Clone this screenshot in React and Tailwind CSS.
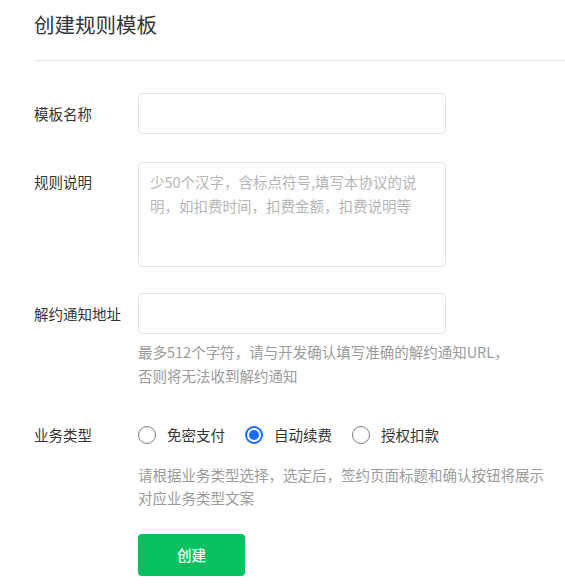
import { useState } from "react";

const font = { fontFamily: '"Noto Sans CJK SC", "Liberation Sans", sans-serif' };

const types = ["免密支付", "自动续费", "授权扣款"];

function Radio({ checked, label, onClick }) {
  return (
    <button type="button" onClick={onClick} className="flex items-center gap-[11px] cursor-pointer">
      {checked ? (
        <span className="flex h-[18px] w-[18px] items-center justify-center rounded-full border-2 border-[#1a6dff]">
          <span className="h-[10px] w-[10px] rounded-full bg-[#1a6dff]" />
        </span>
      ) : (
        <span className="h-[18px] w-[18px] rounded-full border-[1.5px] border-[#7f7f7f]" />
      )}
      <span className="text-[14.5px] leading-[24px] text-[#353535]">{label}</span>
    </button>
  );
}

export default function App() {
  const [type, setType] = useState("自动续费");

  return (
    <div className="min-h-[588px] w-[565px] bg-white pl-[34px]" style={font}>
      {/* Header */}
      <div className="border-b border-[#e6e6e6] pt-[10px] pb-[22px]">
        <h1 className="text-[20.5px] leading-[28px] text-[#353535]">创建规则模板</h1>
      </div>

      {/* Name */}
      <div className="mt-[32px] flex">
        <label className="w-[104px] text-[14.5px] leading-[41px] text-[#353535]">模板名称</label>
        <input className="h-[41px] w-[308px] rounded-[4px] border border-[#e3e3e3] px-[11px] text-[14.5px] outline-none" />
      </div>

      {/* Description */}
      <div className="mt-[28px] flex">
        <label className="w-[104px] pt-[8px] text-[14.5px] leading-[24px] text-[#353535]">规则说明</label>
        <textarea
          className="h-[105px] w-[308px] resize-none rounded-[4px] border border-[#e3e3e3] px-[11px] pt-[7px] text-[14.5px] leading-[24px] outline-none placeholder:text-[#b5b5b5]"
          placeholder="少50个汉字，含标点符号,填写本协议的说明，如扣费时间，扣费金额，扣费说明等"
        />
      </div>

      {/* Notify URL */}
      <div className="mt-[26px] flex">
        <label className="w-[104px] text-[14.5px] leading-[41px] text-[#353535]">解约通知地址</label>
        <div>
          <input className="h-[41px] w-[308px] rounded-[4px] border border-[#e3e3e3] px-[11px] text-[14.5px] outline-none" />
          <p className="mt-[6px] text-[14.5px] leading-[24px] text-[#9b9b9b]">
            最多512个字符，请与开发确认填写准确的解约通知URL，
            <br />
            否则将无法收到解约通知
          </p>
        </div>
      </div>

      {/* Business type */}
      <div className="mt-[35px] flex">
        <label className="w-[104px] text-[14.5px] leading-[24px] text-[#353535]">业务类型</label>
        <div>
          <div className="flex items-center gap-[20px]">
            {types.map((t) => (
              <Radio key={t} label={t} checked={type === t} onClick={() => setType(t)} />
            ))}
          </div>
          <p className="mt-[16px] text-[14.5px] leading-[23px] text-[#9b9b9b]">
            请根据业务类型选择，选定后，签约页面标题和确认按钮将展示
            <br />
            对应业务类型文案
          </p>
          <button className="mt-[25px] h-[42px] w-[107px] rounded-[4px] bg-[#07c160] text-[14.5px] font-medium text-white">
            创建
          </button>
        </div>
      </div>
    </div>
  );
}
